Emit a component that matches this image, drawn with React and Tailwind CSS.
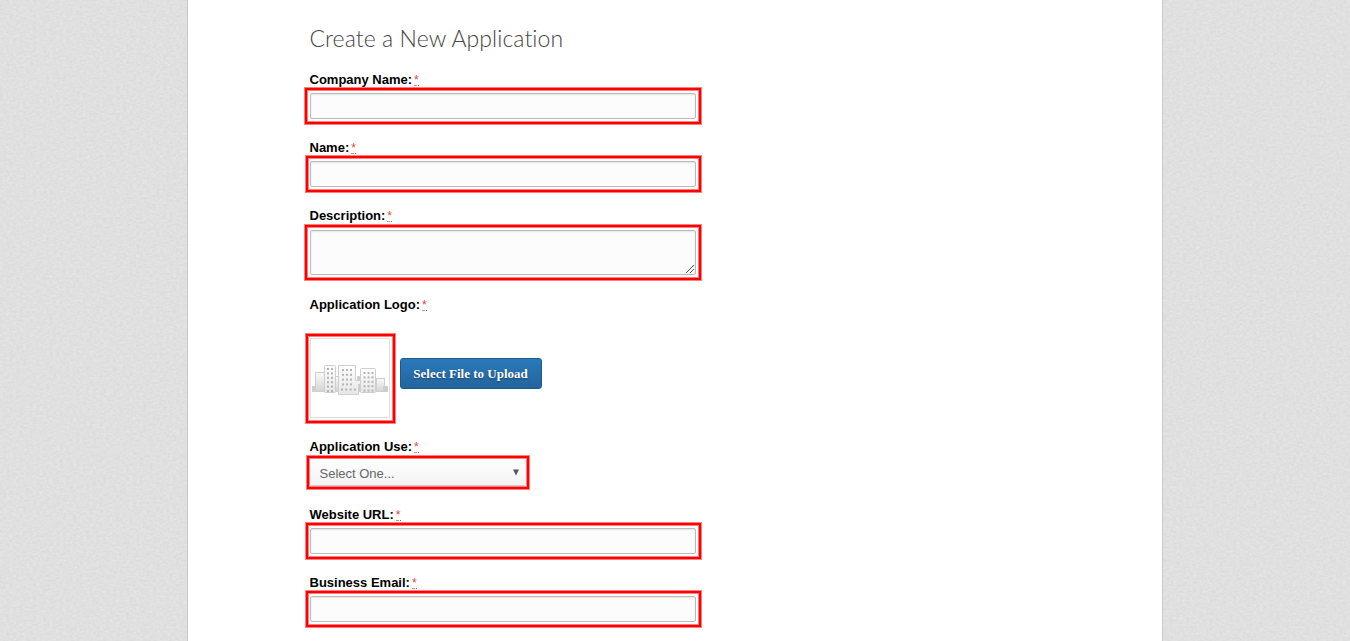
import React from "react";

const frame =
  "border-2 border-[#ff0000] shadow-[0_0_0_1px_rgba(255,0,0,0.5),inset_0_0_0_1px_rgba(255,0,0,0.5)]";
const control =
  "block w-[386px] rounded-[2px] border border-[#bbbbbb] bg-[#fcfcfc] shadow-[inset_0_1px_2px_rgba(0,0,0,0.1)] outline-none";

function Label({ children }) {
  return (
    <div className="flex h-5 items-center pl-[4.5px] pt-[3px] text-[13px] font-bold leading-5 text-black">
      <span>{children}:</span>
      <span className="ml-[2px] flex h-[13px] w-[5px] flex-col justify-between text-[12px] font-normal leading-[14px] text-[#e0483e]">
        <span className="h-[12px]">*</span>
        <span className="flex h-px gap-px">
          <span className="w-[3px] bg-[#ea8a84]" />
          <span className="w-px bg-[#e0483e]" />
        </span>
      </span>
    </div>
  );
}

function TextField({ label, wide }) {
  return (
    <div className="h-[68px]">
      <Label>{label}</Label>
      <div className={`h-9 py-[3px] ${frame} ${wide ? "w-[396px] px-[3px]" : "ml-px w-[395px] pl-[2px] pr-[3px]"}`}>
        <input aria-label={label} className={`h-[26px] ${control}`} />
      </div>
    </div>
  );
}

function Windows({ x, y, cols, rows, dx = 4, dy = 4.4 }) {
  const cells = [];
  for (let r = 0; r < rows; r++)
    for (let c = 0; c < cols; c++)
      cells.push(<rect key={`${r}-${c}`} x={x + c * dx} y={y + r * dy} width="2" height="2" />);
  return <g fill="#b4b4b4">{cells}</g>;
}

function Buildings() {
  return (
    <svg width="78" height="78" viewBox="0 0 78 78" className="block">
      <defs>
        <linearGradient id="wall" x1="0" y1="0" x2="0" y2="1">
          <stop offset="0" stopColor="#fafafa" />
          <stop offset="1" stopColor="#d4d4d4" />
        </linearGradient>
        <linearGradient id="tower" x1="0" y1="0" x2="0" y2="1">
          <stop offset="0" stopColor="#ffffff" />
          <stop offset="1" stopColor="#e6e6e6" />
        </linearGradient>
      </defs>
      <g stroke="#cfcfcf" fill="url(#wall)">
        <rect x="1.500" y="47.500" width="5" height="5" fill="#cccccc" />
        <rect x="4.500" y="33.500" width="9" height="19" />
        <rect x="24.500" y="37.500" width="6" height="15" />
        <rect x="46.500" y="37.500" width="5" height="15" fill="#cccccc" />
        <rect x="65.500" y="39.500" width="8" height="13" />
        <rect x="72.500" y="47.500" width="4" height="5" fill="#cccccc" />
        <rect x="13.500" y="26.500" width="11" height="27" rx="1" fill="url(#tower)" />
        <rect x="49.500" y="29.500" width="15" height="24" rx="1" fill="url(#tower)" />
        <path d="M27.500 26.500h17v15h5v4h-2v10h-20z" fill="url(#tower)" strokeLinejoin="round" />
      </g>
      <Windows x={16} y={29} cols={2} rows={6} />
      <Windows x={31} y={30} cols={3} rows={4} dy={4.8} />
      <Windows x={30} y={49.5} cols={4} rows={1} dx={4.3} />
      <Windows x={52.5} y={33} cols={3} rows={5} />
    </svg>
  );
}

function Paper() {
  return (
    <svg className="absolute inset-0 h-full w-full" aria-hidden="true">
      <filter id="paper" x="0" y="0" width="100%" height="100%" colorInterpolationFilters="sRGB">
        <feTurbulence type="fractalNoise" baseFrequency="0.3 0.45" numOctaves="3" seed="4" />
        <feColorMatrix values="0.06 0 0 0 0.847  0.06 0 0 0 0.847  0.06 0 0 0 0.847  0 0 0 0 1" />
      </filter>
      <rect width="100%" height="100%" filter="url(#paper)" />
    </svg>
  );
}

export default function App() {
  return (
    <div className="relative h-[641px] w-[1350px] overflow-hidden bg-[#dfdfdf] font-['Liberation_Sans',Arial,sans-serif]">
      <Paper />
      <main className="relative ml-[187px] h-full w-[976px] border-x border-[#c9c9c9] bg-white pl-[117px]">
        <h1 className="h-[68px] pl-[4.5px] pt-[22px] font-['Lato',sans-serif] text-[23px] font-light leading-8 tracking-[0.08px] text-[#444444]">
          Create a New Application
        </h1>
        <TextField label="Company Name" wide />
        <TextField label="Name" />
        <div className="h-[89px]">
          <Label>Description</Label>
          <div className={`mt-px h-[55px] w-[396px] p-[3px] ${frame}`}>
            <div className="relative">
              <textarea aria-label="Description" className={`h-[45px] resize-none ${control}`} />
              <svg className="absolute bottom-px right-[2px]" width="9" height="9" viewBox="0 0 9 9" stroke="#555555" shapeRendering="crispEdges">
                <path d="M0.500 8.500L8.500 0.500M4.500 8.500L8.500 4.500" />
              </svg>
            </div>
          </div>
        </div>
        <div className="h-[142px]">
          <Label>Application Logo</Label>
          <div className="mt-[21px] flex items-center">
            <div className={`ml-px h-[89px] w-[89px] pl-[2px] pt-[2px] ${frame}`}>
              <div className="h-20 w-20 border border-[#e0e0e0]">
                <Buildings />
              </div>
            </div>
            <button className="ml-[5px] mt-[-10px] h-[31px] w-[142px] rounded-[3px] border border-[#1d5a8c] bg-linear-to-b from-[#2a7abc] to-[#23649c] pr-px font-['Liberation_Serif',serif] text-[13px] font-bold text-white [text-shadow:0_1px_2px_rgba(0,0,0,0.4)]">
              Select File to Upload
            </button>
          </div>
        </div>
        <div className="h-[68px]">
          <Label>Application Use</Label>
          <div className={`ml-[2px] mt-px h-[33px] w-[222px] p-px ${frame}`}>
            <div className="flex h-[27px] items-center justify-between rounded-[2px] border-b border-[#cccccc] bg-linear-to-b from-white to-[#f3f3f3] pl-[9.5px] pr-[6px] text-[13px] text-[#666666]">
              <span className="pt-[3px]">Select One...</span>
              <svg width="8" height="7" viewBox="0 0 8 7" fill="#555555">
                <path d="M1 0.500h6L4 6.500z" />
              </svg>
            </div>
          </div>
        </div>
        <TextField label="Website URL" />
        <TextField label="Business Email" />
      </main>
    </div>
  );
}
